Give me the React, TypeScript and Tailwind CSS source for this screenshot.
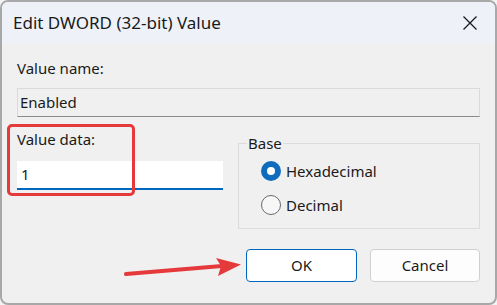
export default function App() {
  return (
    <div className="w-[497px] h-[305px] bg-[#f3f3f3] relative" style={{ fontFamily: '"Noto Sans", "Liberation Sans", sans-serif' }}>
      <div className="w-full h-full rounded-[8px] border-2 border-[#a8a8a8] bg-[#f0f0f0] overflow-hidden flex flex-col">
        <div className="h-[42px] bg-[#eef2f8] flex items-center justify-between pl-[11px] pr-[15px] shrink-0">
          <span className="text-[17px] text-[#1a1a1a]">Edit DWORD (32-bit) Value</span>
          <svg width="16" height="16" viewBox="0 0 16 16" className="mr-[2px]">
            <path d="M1.5 1.5L14.5 14.5M14.5 1.5L1.5 14.5" stroke="#1a1a1a" strokeWidth="1.3" />
          </svg>
        </div>
        <div className="flex-1 px-[15px] pt-[15px] text-[15px] text-[#1a1a1a]">
          <div className="leading-[18px]">Value name:</div>
          <div className="mt-[11px] h-[29px] border border-[#dadada] border-b-[#8a8a8a] bg-[#f0f0f0] flex items-center px-[2px] leading-none">
            Enabled
          </div>
          <div className="flex mt-[12px]">
            <div className="w-[206px]">
              <div className="leading-[18px] pt-[1px]">Value data:</div>
              <div className="mt-[13px] h-[29px] bg-white border-b-2 border-[#0067c0] flex items-center px-[4px]">1</div>
            </div>
            <div className="ml-[15px] flex-1 relative pt-[14px]">
              <span className="absolute left-[9px] top-[5px] bg-[#f0f0f0] px-[1px] leading-[18px]">Base</span>
              <div className="h-[86px] border border-[#dcdcdc] pl-[22px] pt-[17px] flex flex-col gap-[14px]">
                <label className="flex items-center gap-[5px] h-[20px]">
                  <span className="w-[20px] h-[20px] rounded-full bg-[#0f6cbd] flex items-center justify-center">
                    <span className="w-[8px] h-[8px] rounded-full bg-white" />
                  </span>
                  Hexadecimal
                </label>
                <label className="flex items-center gap-[5px] h-[20px]">
                  <span className="w-[20px] h-[20px] rounded-full border border-[#6a6a6a] bg-[#f7f7f7]" />
                  Decimal
                </label>
              </div>
            </div>
          </div>
          <div className="flex justify-end gap-[13px] mt-[20px]">
            <button className="w-[111px] h-[33px] rounded-[4px] border border-[#0067c0] bg-white text-[15px]">OK</button>
            <button className="w-[110px] h-[33px] rounded-[4px] border border-[#d0d0d0] bg-[#fdfdfd] text-[15px]">Cancel</button>
          </div>
        </div>
      </div>
      <div className="absolute left-[7px] top-[124px] w-[128px] h-[72px] border-[3px] border-[#e5393c] rounded-[5px]" />
      <svg className="absolute left-0 top-0" width="497" height="305" viewBox="0 0 497 305">
        <path d="M126 274 L222 266" stroke="#e5393c" strokeWidth="4" strokeLinecap="round" />
        <path d="M241 264.5 L216 258 L221 266 L218 276 Z" fill="#e5393c" />
      </svg>
    </div>
  )
}
